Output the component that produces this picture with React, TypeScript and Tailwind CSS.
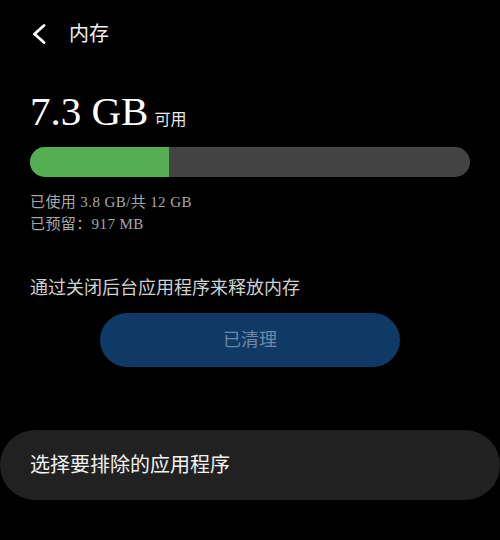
import React from 'react';

const font = { fontFamily: '"Liberation Serif", "Noto Sans CJK SC", serif' };

const App: React.FC = () => {
  return (
    <div className="w-[500px] h-[540px] bg-black text-white overflow-hidden flex flex-col" style={font}>
      {/* Header */}
      <div className="flex items-center h-[34px] mt-[17px] pl-[31px] gap-[22px]">
        <svg width="16" height="20" viewBox="0 0 16 20" fill="none" stroke="white" strokeWidth="2.8" strokeLinecap="round" strokeLinejoin="round">
          <path d="M13 1.5 L3.5 10 L13 18.5" />
        </svg>
        <span className="text-[20px] leading-none text-[#f0f0f0]">内存</span>
      </div>

      {/* Available */}
      <div className="flex items-baseline pl-[30px] mt-[40px] gap-[6px]">
        <span className="text-[41px] leading-none">7.3 GB</span>
        <span className="text-[16px] leading-none text-[#e8e8e8]">可用</span>
      </div>

      {/* Bar */}
      <div className="mx-[30px] mt-[15px] h-[30px] rounded-full bg-[#434343] overflow-hidden flex">
        <div className="h-full bg-[#55ae52]" style={{ width: `${(3.8 / 12) * 100}%` }}></div>
      </div>

      <div className="pl-[30px] mt-[14px] text-[15px] leading-[22px] tracking-[0.4px] text-[#a8a8a8]">
        <div>已使用 3.8 GB/共 12 GB</div>
        <div>已预留：917 MB</div>
      </div>

      <div className="pl-[30px] mt-[41px] text-[18px] leading-[24px] text-[#d0d0d0]">
        通过关闭后台应用程序来释放内存
      </div>

      <div className="flex justify-center mt-[13px]">
        <button className="w-[300px] h-[54px] rounded-full bg-[#0f3a66] text-[18px] text-[#6f88a6]" style={font}>
          已清理
        </button>
      </div>

      {/* Exclude apps */}
      <div className="mt-[63px] h-[70px] rounded-full bg-[#212121] flex items-center pl-[30px]">
        <span className="text-[20px] leading-none text-[#f2f2f2]">选择要排除的应用程序</span>
      </div>
    </div>
  );
};

export default App;
